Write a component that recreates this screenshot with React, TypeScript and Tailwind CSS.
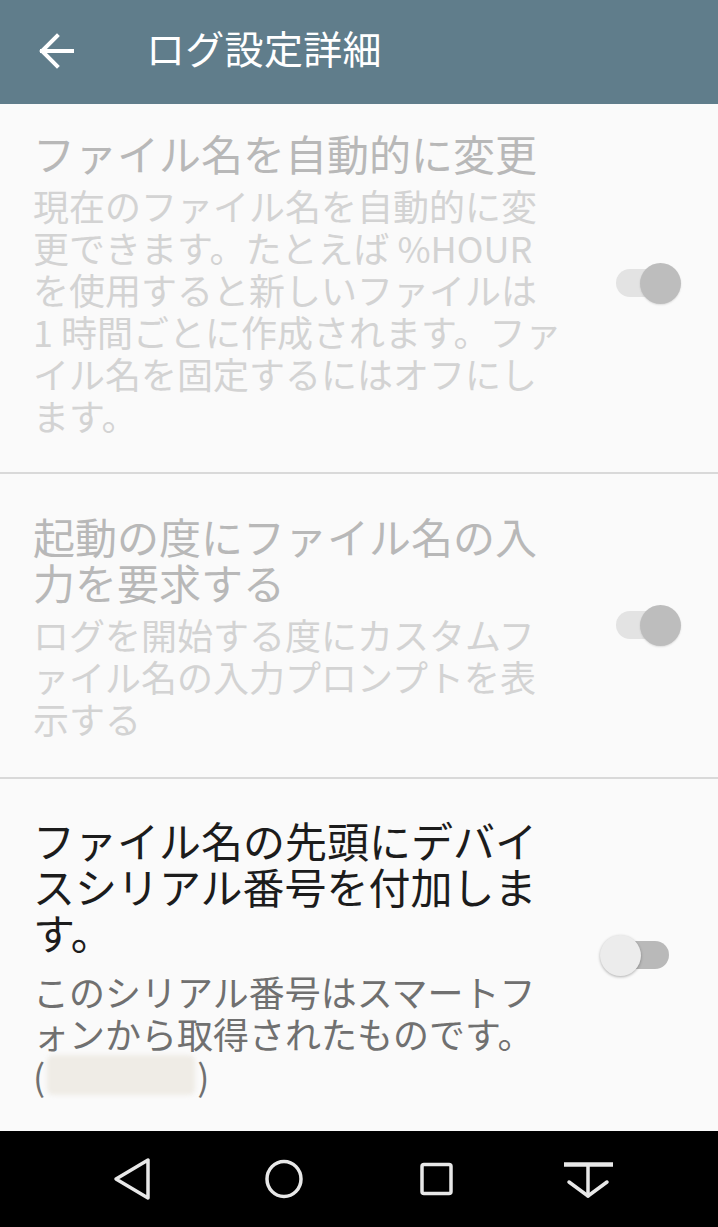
const jp = "font-['Noto_Sans_CJK_JP','Noto_Sans',sans-serif]";

type SwitchProps = { on: boolean; disabled?: boolean };

const Switch = ({ on, disabled }: SwitchProps) => {
  const track = disabled ? "bg-[#e3e3e3]" : on ? "bg-[#9fb3bd]" : "bg-[#b9b9b9]";
  const thumb = disabled ? "bg-[#bdbdbd]" : on ? "bg-[#607d8b]" : "bg-[#ececec]";
  return (
    <div className="relative w-[82px] h-[42px] shrink-0">
      <div className={`absolute top-[7px] left-[13px] w-[56px] h-[28px] rounded-full ${track}`} />
      <div
        className={`absolute top-[1px] w-[41px] h-[41px] rounded-full ${thumb} ${
          on ? "left-[37px]" : "left-0"
        } ${disabled ? "shadow-[0_1px_2px_rgba(0,0,0,0.12)]" : "shadow-[0_1px_3px_rgba(0,0,0,0.3)]"}`}
      />
    </div>
  );
};

const Divider = () => <div className="h-[2px] bg-[#d9d9d9] shrink-0" />;

type RowProps = {
  title: string[];
  desc: React.ReactNode[];
  disabled?: boolean;
  on: boolean;
  rowClass: string;
  textClass: string;
  gapClass: string;
  switchClass: string;
};

const SettingRow = ({ title, desc, disabled, on, rowClass, textClass, gapClass, switchClass }: RowProps) => (
  <div className={`flex items-start justify-between shrink-0 ${rowClass}`}>
    <div className={`pl-[33px] ${textClass}`}>
      <div className={`text-[42px] leading-[46px] whitespace-nowrap ${disabled ? "text-[#b8b8b8]" : "text-[#1c1c1c]"}`}>
        {title.map((t) => (
          <div key={t}>{t}</div>
        ))}
      </div>
      <div className={`${gapClass} text-[36px] leading-[42px] whitespace-nowrap ${disabled ? "text-[#d3d3d3]" : "text-[#707070]"}`}>
        {desc.map((d, i) => (
          <div key={i}>{d}</div>
        ))}
      </div>
    </div>
    <div className={switchClass}>
      <Switch on={on} disabled={disabled} />
    </div>
  </div>
);

export default function App() {
  return (
    <div className={`w-full h-[1227px] flex flex-col bg-[#fafafa] overflow-hidden ${jp}`}>
      {/* toolbar */}
      <div className="h-[104px] shrink-0 bg-[#607d8b] flex items-center">
        <div className="w-[146px] flex items-center pl-[38px] mb-[3px]">
          <svg width="36" height="36" viewBox="0 0 36 36" fill="none" stroke="#ffffff" strokeWidth="4" strokeLinecap="square">
            <path d="M4 18 H34" />
            <path d="M19 3 L4 18 L19 33" strokeLinejoin="miter" />
          </svg>
        </div>
        <div className="text-white text-[39px] leading-none tracking-[0.3px] mb-[10px]">ログ設定詳細</div>
      </div>

      {/* list */}
      <div className="flex-1 flex flex-col overflow-hidden">
        <SettingRow
          disabled
          on
          rowClass="h-[368px]"
          textClass="pt-[26px]"
          gapClass="mt-[8px]"
          switchClass="mt-[158px] mr-[33px]"
          title={["ファイル名を自動的に変更"]}
          desc={[
            "現在のファイル名を自動的に変",
            "更できます。たとえば %HOUR",
            "を使用すると新しいファイルは",
            "1 時間ごとに作成されます。ファ",
            "イル名を固定するにはオフにし",
            "ます。",
          ]}
        />
        <Divider />
        <SettingRow
          disabled
          on
          rowClass="h-[303px]"
          textClass="pt-[39px]"
          gapClass="mt-[8px]"
          switchClass="mt-[130px] mr-[33px]"
          title={["起動の度にファイル名の入", "力を要求する"]}
          desc={["ログを開始する度にカスタムフ", "ァイル名の入力プロンプトを表", "示する"]}
        />
        <Divider />
        <SettingRow
          on={false}
          rowClass="h-[352px]"
          textClass="pt-[38px]"
          gapClass="mt-[15px]"
          switchClass="mt-[155px] mr-[36px]"
          title={["ファイル名の先頭にデバイ", "スシリアル番号を付加しま", "す。"]}
          desc={[
            "このシリアル番号はスマートフ",
            "ォンから取得されたものです。",
            <span key="serial" className="flex items-center">
              (
              <span className="inline-block w-[148px] h-[40px] mx-[2px] rounded-[6px] bg-[#efece6] blur-[2px]" />
              )
            </span>,
          ]}
        />
      </div>

      {/* navigation bar */}
      <div className="h-[96px] shrink-0 bg-black flex items-center pl-[56px]">
        <div className="w-[152px] flex justify-center">
          <svg width="52" height="52" viewBox="-26 -26 52 52" fill="none" stroke="#e8e8e8" strokeWidth="3.5" strokeLinejoin="round">
            <path d="M16 -19 L16 19 L-16 0 Z" />
          </svg>
        </div>
        <div className="w-[152px] flex justify-center">
          <svg width="52" height="52" viewBox="-26 -26 52 52" fill="none" stroke="#e8e8e8" strokeWidth="3.5">
            <ellipse cx="0" cy="0" rx="17" ry="17.5" />
          </svg>
        </div>
        <div className="w-[152px] flex justify-center">
          <svg width="52" height="52" viewBox="-26 -26 52 52" fill="none" stroke="#e8e8e8" strokeWidth="3.5">
            <rect x="-14" y="-14.5" width="29" height="29" rx="2" />
          </svg>
        </div>
        <div className="w-[152px] flex justify-center">
          <svg width="56" height="52" viewBox="-28 -26 56 52" fill="none" stroke="#e8e8e8" strokeWidth="3.5" strokeLinecap="round" strokeLinejoin="round">
            <path d="M-24 -14.5 H25" strokeWidth="4.5" strokeLinecap="butt" />
            <path d="M0 -14 V17" />
            <path d="M-19 3 L0 17 L19 3" />
          </svg>
        </div>
      </div>
    </div>
  );
}
